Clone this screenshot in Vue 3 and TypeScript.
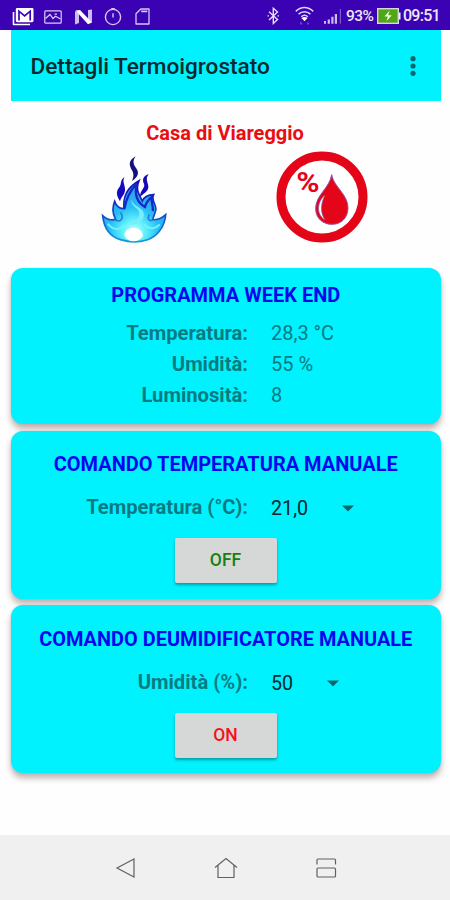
<script setup lang="ts">
interface Reading {
  label: string
  value: string
}

interface Command {
  id: string
  title: string
  label: string
  value: string
  action: string
}

const readings: Reading[] = [
  { label: 'Temperatura:', value: '28,3 °C' },
  { label: 'Umidità:', value: '55 %' },
  { label: 'Luminosità:', value: '8' },
]

const commands: Command[] = [
  { id: 'temperature', title: 'COMANDO TEMPERATURA MANUALE', label: 'Temperatura (°C):', value: '21,0', action: 'OFF' },
  { id: 'humidity', title: 'COMANDO DEUMIDIFICATORE MANUALE', label: 'Umidità (%):', value: '50', action: 'ON' },
]
</script>

<template>
  <div class="screen">
    <div class="status">
      <div class="notices">
        <svg class="mail" width="22" height="20" viewBox="0 0 22 20" fill="none">
          <path d="M1.5 5V17.5H18" stroke="#fff" stroke-width="1.6" stroke-linejoin="round" />
          <rect x="3.8" y="1" width="17.7" height="14.2" rx="1.4" fill="#fff" />
          <path d="M7 13.4V4.2L12.6 8.8L18.2 4.2V13.4" stroke="#3b02b4" stroke-width="1.7" />
        </svg>
        <svg class="photo" width="18" height="14" viewBox="0 0 18 14" fill="none" stroke="#dcd0f4" stroke-width="1.2">
          <rect x=".8" y=".8" width="16.4" height="12.4" rx="1" />
          <path d="M1.5 8.5L6 4.5L9 8.5L11.5 6.3L16.5 9M10.5 4.2H13" />
        </svg>
        <svg class="nougat" width="19" height="16" viewBox="0 0 19 16">
          <path d="M1 2L5 4V14L1 15.5ZM14 1L18 .5V13.5L14 12Z" fill="#cdbcf0" />
          <path d="M1.5 1.5L6 1L18 13.5L14 15.2Z" fill="#fff" />
        </svg>
        <svg class="timer" width="18" height="19" viewBox="0 0 18 19" fill="none" stroke="#d5c8f1" stroke-width="1.4">
          <circle cx="9" cy="10" r="7.6" />
          <path d="M9 6.2V10.5M7.2 1.6H10.8" />
        </svg>
        <svg class="sd" width="15" height="17" viewBox="0 0 15 17" fill="none" stroke="#d5c8f1" stroke-width="1.3">
          <path d="M5.8 1H14V16H1V5.8Z" stroke-linejoin="round" />
          <path d="M6.2 3.4H12.3" stroke-width="1.7" />
        </svg>
      </div>
      <div class="system">
        <svg class="bluetooth" width="13" height="18" viewBox="0 0 13 18" fill="none" stroke="#e6def8" stroke-width="1.4">
          <path d="M2 4.7L10.5 12.6L6.3 16.5V1.3L10.5 5.1L2 13M.5 8.9H2M10.5 8.9H12" />
        </svg>
        <svg class="wifi" width="19" height="20" viewBox="0 0 19 20" fill="none" stroke="#dfd4f6" stroke-width="1.5">
          <path d="M.8 5.4C6 .3 13 .3 18.2 5.4M3.6 8.1C7 4.9 12 4.9 15.4 8.1M6.2 10.8C8.2 9 10.8 9 12.8 10.8" />
          <path d="M6.4 12.1Q9.5 10 12.6 12.1L9.5 15.3Z" fill="#fff" stroke="none" />
          <path d="M5.5 16.5L6.7 18.5M13.5 18.5L12.5 16.5" stroke="#7951cc" />
        </svg>
        <svg class="signal" width="19" height="17" viewBox="0 0 19 17">
          <path d="M1 13H3V15.8H1ZM4.7 11.4H6.9V15.8H4.7ZM8.3 8.8H10.5V15.8H8.3ZM11.8 6H14V15.8H11.8Z" fill="#cbbdec" />
          <path d="M16.8 1H18V15.8H16.8Z" fill="#7d59cd" />
        </svg>
        <span class="percent">93%</span>
        <svg class="battery" width="24" height="16" viewBox="0 0 24 16">
          <rect x=".7" y=".7" width="20.6" height="14.6" fill="#4fa616" stroke="#d9d4e2" stroke-width="1.4" />
          <path d="M22 4.5H23.5V11.5H22Z" fill="#f2eefa" />
          <path d="M12.7 2.6L7.5 8.4H10.8L9.4 13.3L14.7 7.2H11.2Z" fill="#efffe0" />
        </svg>
        <span class="clock">09:51</span>
      </div>
    </div>

    <header class="appbar">
      <h1>Dettagli Termoigrostato</h1>
      <svg class="more" width="6" height="22" viewBox="0 0 6 22" fill="#08666d">
        <circle cx="3" cy="3.7" r="2.6" />
        <circle cx="3" cy="11" r="2.6" />
        <circle cx="3" cy="18.3" r="2.6" />
      </svg>
    </header>

    <section class="place">
      <h2>Casa di Viareggio</h2>
      <div class="symbols">
        <svg class="flame" width="68" height="88" viewBox="30 120 204 264">
          <defs>
            <radialGradient id="heat" gradientUnits="userSpaceOnUse" cx="132" cy="350" r="125">
              <stop offset="0" stop-color="#c8ffff" />
              <stop offset=".28" stop-color="#5ef0fb" />
              <stop offset=".6" stop-color="#28bcf6" />
              <stop offset="1" stop-color="#329df2" />
            </radialGradient>
            <linearGradient id="edge" x1="0" y1="0" x2="0" y2="1">
              <stop offset="0" stop-color="#1508b4" />
              <stop offset=".5" stop-color="#123fc4" />
              <stop offset="1" stop-color="#159bdc" />
            </linearGradient>
          </defs>
          <path d="M137 124C114 137 117 151 126 166C133 178 130 188 126 198C145 185 149 173 138 159C130 148 127 138 137 124Z" fill="#15107f" />
          <path d="M103 186C88 198 96 207 88 217C75 232 82 245 90 259C94 244 107 239 105 220C104 208 97 201 103 186Z" fill="#1608bf" />
          <path d="M176 177C157 184 157 196 162 206C167 219 149 225 150 246C157 237 175 231 175 216C175 202 164 193 176 177Z" fill="#1608b5" />
          <path d="M38 302C50 314 62 317 77 313C66 295 67 277 74 259C79 274 89 282 102 281C98 246 110 218 147 197C136 222 146 237 157 258C162 246 173 240 191 239C181 257 202 270 197 286C194 298 190 306 188 314C203 316 216 309 227 299C224 336 202 364 173 374C145 383 114 381 91 374C58 364 42 340 38 302Z" fill="url(#heat)" stroke="url(#edge)" stroke-width="5" />
          <path d="M103 282C108 250 119 229 141 205C131 243 143 263 165 276C168 263 174 255 186 245C180 264 193 275 188 288" fill="none" stroke="#1428c8" stroke-width="7" />
          <path d="M75 315C91 323 103 312 92 292M188 315C176 320 171 310 178 298" fill="none" stroke="#2380de" stroke-width="5" />
          <path d="M124 254C123 278 151 278 148 299C146 315 123 318 122 329C147 330 166 312 161 294C157 276 130 275 124 254Z" fill="#76effa" />
          <path d="M53 326C71 348 91 346 104 329M209 328C190 347 172 341 163 327" fill="none" stroke="#6df4fa" stroke-width="6" />
          <path d="M103 362C103 346 118 337 133 338C149 339 158 350 159 363C151 374 141 379 131 379C119 379 110 373 103 362Z" fill="#fff" />
        </svg>
        <svg class="percent-drop" width="94" height="94" viewBox="45 105 282 282">
          <circle cx="186" cy="246" r="123" fill="#fff" stroke="#e40518" stroke-width="27" />
          <text x="109" y="231" textLength="70" lengthAdjust="spacingAndGlyphs" class="sign">%</text>
          <path d="M215 179C221 216 265 238 264 280C263 310 243 328 216 328C188 328 167 309 167 281C167 240 209 219 215 179Z" fill="#e40518" stroke="#9a4c9c" stroke-width="3" />
          <path d="M195 241C173 257 166 297 195 315C180 293 182 265 195 241Z" fill="#fff" stroke="#7d5aae" stroke-width="2" />
        </svg>
      </div>
    </section>

    <main class="cards">
      <section class="card program">
        <h3>PROGRAMMA WEEK END</h3>
        <div v-for="r in readings" :key="r.label" class="row">
          <span class="label">{{ r.label }}</span>
          <span class="value">{{ r.value }}</span>
        </div>
      </section>
      <section v-for="c in commands" :key="c.id" class="card command" :class="c.id">
        <h3>{{ c.title }}</h3>
        <div class="row">
          <span class="label">{{ c.label }}</span>
          <span class="select">
            <span>{{ c.value }}</span>
            <svg width="12" height="7" viewBox="0 0 12 7"><path d="M0 .5H12L6 6.5Z" fill="#08666d" /></svg>
          </span>
        </div>
        <button type="button">{{ c.action }}</button>
      </section>
    </main>

    <nav class="navbar">
      <svg width="26" height="26" viewBox="0 0 26 26"><path d="M4 13L21 4V22Z" /></svg>
      <svg width="26" height="26" viewBox="0 0 26 26"><path d="M2 12.5L13 3.5L24 12.5M5 10.5V22.5H21V10.5" /></svg>
      <svg width="26" height="26" viewBox="0 0 26 26"><path d="M4 9.5V5Q4 4 5 4H21.5Q22.5 4 22.5 5V9.5M5 13H21.5Q22.5 13 22.5 14V21Q22.5 22 21.5 22H5Q4 22 4 21V14Q4 13 5 13Z" /></svg>
    </nav>
  </div>
</template>

<style>
body {
  background: #fefefe;
}
</style>

<style scoped>
.screen {
  display: flex;
  flex-direction: column;
  width: 450px;
  height: 900px;
  overflow: hidden;
  background: #fefefe;
  font-family: Roboto, sans-serif;
}
svg {
  display: block;
  flex: none;
}
h1, h2, h3 {
  margin: 0;
  white-space: nowrap;
}
.status {
  display: flex;
  justify-content: space-between;
  height: 30px;
  box-sizing: border-box;
  padding: 2px 11px 0 12px;
  background: #3b02b4;
}
.notices, .system {
  display: flex;
  align-items: center;
}
.mail, .photo, .nougat, .timer, .sd {
  margin-top: 1px;
}
.photo { margin-left: 10px; }
.nougat { margin-left: 12px; }
.timer { margin-left: 11px; }
.sd { margin-left: 13px; }
.wifi { margin-left: 15px; }
.signal { margin-left: 9px; }
.percent, .clock {
  color: #ece6f9;
  font-size: 16px;
  line-height: 20px;
  font-weight: 500;
}
.percent {
  width: 28px;
  margin-left: 4px;
  font-size: 15.5px;
  letter-spacing: -0.5px;
}
.battery { margin-left: 3px; }
.clock {
  width: 36px;
  margin-left: 2px;
  letter-spacing: -0.75px;
}
.appbar {
  display: flex;
  align-items: center;
  justify-content: space-between;
  height: 70.5px;
  margin: 0 9.5px 0 11px;
  box-sizing: border-box;
  padding: 1px 25px 0 19.5px;
  background: #00f2ff;
}
h1 {
  padding-top: 1px;
  color: #052a2d;
  font-size: 22.6px;
  font-weight: 500;
}
.place {
  height: 167px;
}
h2 {
  padding-top: 20px;
  color: #ea0d12;
  font-size: 20px;
  line-height: 24px;
  font-weight: 700;
  text-align: center;
}
.symbols {
  display: flex;
  justify-content: space-between;
  padding: 5px 81px 0 100px;
}
.flame { margin-top: 5px; }
.sign {
  font: 700 82px Roboto, sans-serif;
  fill: #e40518;
}
.cards {
  display: flex;
  flex-direction: column;
  gap: 6.5px;
  height: 567.5px;
  padding: 0 9.5px 0 11px;
}
.card {
  display: flex;
  flex-direction: column;
  border-radius: 12px;
  background: #00f2ff;
  box-shadow: 0 5px 6px rgba(60, 20, 20, 0.32), 0 0 2px rgba(0, 0, 0, 0.12);
}
.program {
  height: 156.5px;
}
.command {
  height: 168px;
}
h3 {
  padding-top: 15px;
  color: #0707ed;
  font-size: 20px;
  line-height: 24px;
  font-weight: 700;
  text-align: center;
}
.program h3 { margin-bottom: 11px; }
.command h3 { padding-top: 21px; }
.humidity h3 {
  padding-top: 21.5px;
  font-size: 19.95px;
}
.row {
  display: grid;
  grid-template-columns: 237px 1fr;
  column-gap: 23px;
  height: 31.2px;
  line-height: 31px;
  font-size: 20px;
}
.label {
  color: #087b82;
  font-size: 20.2px;
  font-weight: 700;
  text-align: right;
  white-space: nowrap;
}
.value {
  color: #087b82;
}
.command .row {
  margin-top: 16.5px;
}
.select {
  display: flex;
  align-items: center;
  justify-content: space-between;
  width: 83px;
  padding-top: 1px;
  color: #05292c;
  font-size: 19.7px;
}
.humidity .select {
  width: 68px;
}
button {
  width: 102px;
  height: 45px;
  margin: 14.5px 0 0 163.5px;
  padding: 0;
  border: 0;
  border-radius: 2px;
  background: #d6d8d7;
  box-shadow: 0 2px 3px rgba(0, 0, 0, 0.35);
  font: 500 17.5px Roboto, sans-serif;
  color: #158015;
}
.humidity button {
  color: #f5101c;
}
.navbar {
  display: flex;
  align-items: center;
  justify-content: space-between;
  height: 65px;
  box-sizing: border-box;
  padding: 0 111.5px 0 112.5px;
  background: #f0f0f0;
}
.navbar path {
  fill: none;
  stroke: #616161;
  stroke-width: 1.2;
}
</style>
